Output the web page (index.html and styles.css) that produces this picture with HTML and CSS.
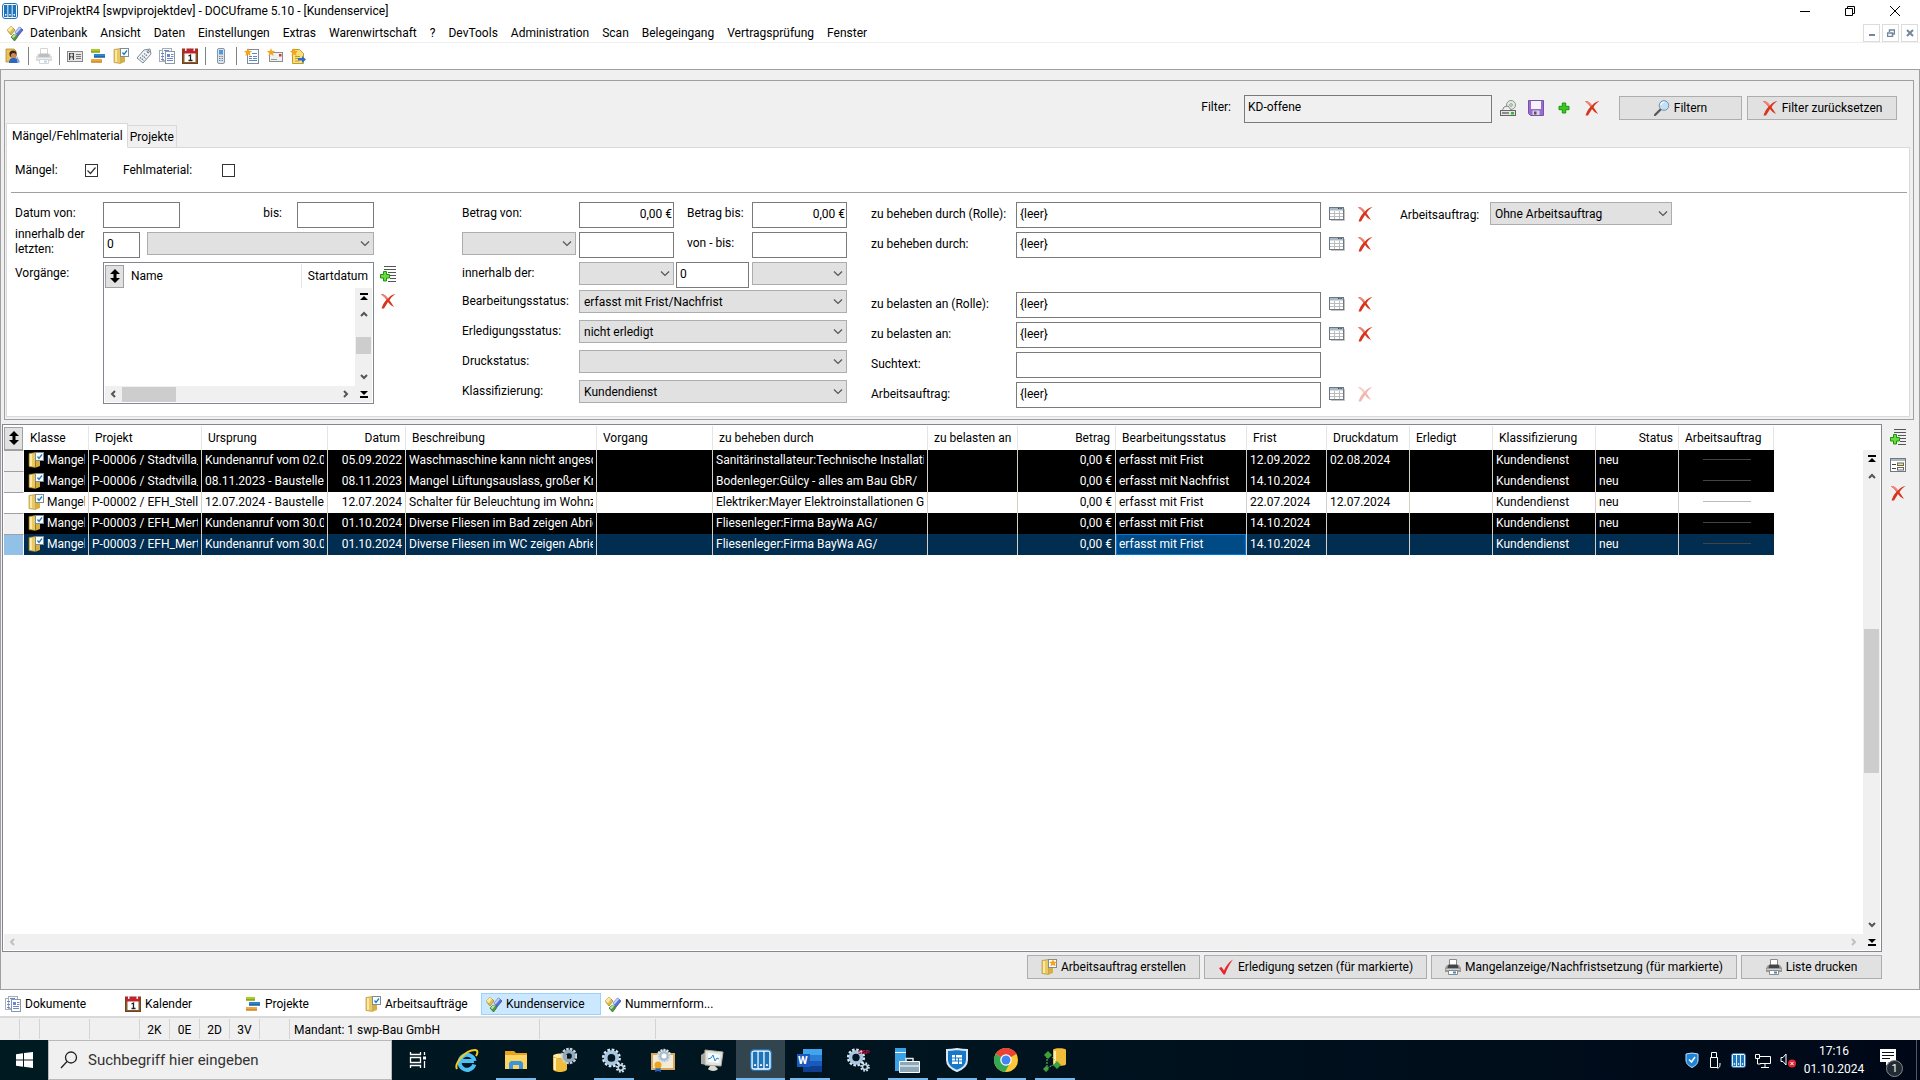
FILE: index.html
```html
<!DOCTYPE html>
<html lang="de">
<head>
    <meta charset="UTF-8">
    <title>DFViProjektR4 [swpviprojektdev] - DOCUframe 5.10 - [Kundenservice]</title>
    <link rel="stylesheet" href="styles.css">
</head>
<body>

<!-- Icon sprite -->
<svg class="sprite" aria-hidden="true">
    <symbol id="docu" viewBox="0 0 16 16">
        <rect x="0.5" y="0.5" width="15" height="15" rx="2.5" fill="#fff" stroke="#1d74b8"/>
        <path d="M2 2h3.4v12H2zM6.3 2h3.4v12H6.3zM10.6 2H14v12h-3.4z" fill="#1d74b8"/>
        <path d="M3 11h1.4v1.4H3zM7.3 11h1.4v1.4H7.3zM11.6 11H13v1.4h-1.4z" fill="#fff"/>
    </symbol>
    <symbol id="diamonds" viewBox="0 0 16 16">
        <path d="M4 1l4 4-4 5-4-5z" fill="#e0be4a" stroke="#9c7a22" stroke-width=".7"/>
        <path d="M4 1l2 2-3 4-3-2z" fill="#f7e9a6"/>
        <path d="M12.500 2L16 5l-5 6-3-4z" fill="#5573d6" stroke="#2c3f9c" stroke-width=".7"/>
        <path d="M12.500 2L14 3.500 9.500 8.500 8 7z" fill="#c3d0fa"/>
        <path d="M7 9l4 2.500L7.500 16 4 12z" fill="#4f9a3c" stroke="#2c6420" stroke-width=".7"/>
        <path d="M7 9l2 1.300-2.500 3L4.500 12z" fill="#b5dfa0"/>
    </symbol>
    <symbol id="user" viewBox="0 0 16 16">
        <path d="M1 1h8l2 2v11H1z" fill="#e8c25c" stroke="#b58a24" stroke-width=".8"/>
        <circle cx="8" cy="6" r="3.600" fill="#3a2416"/>
        <circle cx="8.500" cy="7.500" r="2.600" fill="#c98a5c"/>
        <path d="M4 15c0-4 2-5 4.500-5s5 1 5 5z" fill="#2f65c0"/>
        <path d="M12 8l3 6-3 1z" fill="#7fa7e8"/>
    </symbol>
    <symbol id="printer" viewBox="0 0 16 16">
        <path d="M4.500.5h7v6h-7z" fill="#fff" stroke="#8a8a8a"/>
        <path d="M2 6h12l2 3v4H0V9z" fill="#999"/>
        <path d="M3.500 5.500h9L13.500 9h-11z" fill="#444"/>
        <path d="M1 10h14v1H1z" fill="#d0d0d0"/>
        <path d="M3.500 11.500h9v4h-9z" fill="#fff" stroke="#8a8a8a"/>
        <path d="M8 12.500h3v2H8z" fill="#3a8fc0"/>
    </symbol>
    <symbol id="contact" viewBox="0 0 16 16">
        <rect x=".5" y="3.500" width="15" height="10" fill="#e6e6e6" stroke="#888"/>
        <path d="M2 5h5v7H2z" fill="#444"/>
        <circle cx="4.500" cy="7" r="1.500" fill="#ddd"/>
        <path d="M3 12c0-4 3-4 3 0z" fill="#ddd"/>
        <path d="M9 6.500h5M9 8.500h5M9 10.500h5" stroke="#777"/>
    </symbol>
    <symbol id="bars" viewBox="0 0 16 16">
        <rect x="1" y="1" width="9" height="3.500" fill="#a8cc28"/><path d="M1 3.500h9v1H1z" fill="#6c8c10"/>
        <rect x="4" y="6" width="11" height="3.500" fill="#2a86cc"/><path d="M4 8.500h11v1H4z" fill="#10508c"/>
        <rect x="1" y="11" width="11" height="3.500" fill="#f0a840"/><path d="M1 13.500h11v1H1z" fill="#b87418"/>
    </symbol>
    <symbol id="folder-check" viewBox="0 0 16 16">
        <path d="M8 6l4 1v7l-4 1.500z" fill="#d8ae3c"/>
        <path d="M1 1.500L7.500.5v15L1 14.500z" fill="#eac95e" stroke="#a8842c" stroke-width=".6"/>
        <path d="M2 2h2v12H2z" fill="#f9e9a8"/>
        <rect x="7.500" y=".5" width="8" height="8" fill="#fff" stroke="#7c8c98"/>
        <path d="M9.500 4.500l1.500 2L14 2.500" fill="none" stroke="#1c7cc0" stroke-width="1.300"/>
    </symbol>
    <symbol id="folder-new" viewBox="0 0 16 16">
        <path d="M8 6l4 1v7l-4 1.500z" fill="#d8ae3c"/>
        <path d="M1 1.500L7.500.5v15L1 14.500z" fill="#eac95e" stroke="#a8842c" stroke-width=".6"/>
        <path d="M2 2h2v12H2z" fill="#f9e9a8"/>
        <rect x="7.500" y=".5" width="8" height="8" fill="#fff" stroke="#7c8c98"/>
        <path d="M12 0l1 2.500L16 3l-2 1.500.5 3L12 6 9.500 7.500l.5-3L8 3l3-.5z" fill="#f5a51c"/>
    </symbol>
    <symbol id="tag" viewBox="0 0 16 16">
        <path d="M8 2l6-1 1 5-8 9-6-5z" fill="#f1f5f8" stroke="#7c8a96"/>
        <circle cx="12.200" cy="3.700" r="1.100" fill="#fff" stroke="#667"/>
        <path d="M4 9.500l4 3M6 7.500l4 3M8 5.500l3.500 2.500" stroke="#6c8090" stroke-width="1.200" stroke-dasharray="1.500 .7"/>
    </symbol>
    <symbol id="docs" viewBox="0 0 16 16">
        <rect x=".5" y="2.500" width="9" height="11" fill="#fff" stroke="#a4aeb8"/>
        <rect x="3.500" y=".5" width="9" height="12" fill="#f5f8fc" stroke="#a4aeb8"/>
        <rect x="6.500" y="3.500" width="9" height="12" fill="#fff" stroke="#8c98a4"/>
        <path d="M8 6h3v3H8z" fill="#6a86d0"/>
        <path d="M12 6.500h2.500M12 8.500h2.500M8 10.500h6M8 12.500h6M5 2.500h5M2 5.500h3M2 8.500h3M2 11.500h3" stroke="#6a86d0"/>
    </symbol>
    <symbol id="calendar" viewBox="0 0 16 16">
        <rect x=".5" y="1" width="15" height="14.500" fill="#8a5a2c" stroke="#6c4420"/>
        <path d="M1 1h14v4.500H1z" fill="#c8202c"/>
        <path d="M3 0h1.500v3H3zM11.500 0H13v3h-1.500z" fill="#eee"/>
        <path d="M2.500 5.500h11v8.500h-11z" fill="#fff"/>
        <path d="M6.500 8L8.500 7v5.500M6.500 12.500h4" fill="none" stroke="#222" stroke-width="1.300"/>
    </symbol>
    <symbol id="phone" viewBox="0 0 16 16">
        <rect x="4.500" y=".5" width="7" height="15" rx="1.500" fill="#dfe4ea" stroke="#8894a0"/>
        <path d="M6 2h4v4.500H6z" fill="#4c9ae0"/>
        <path d="M6 8.500h4M6 10.500h4M6 12.500h4" stroke="#78838e" stroke-dasharray="1 .5"/>
    </symbol>
    <symbol id="doc-new" viewBox="0 0 16 16">
        <rect x="3.500" y="1.500" width="11" height="14" fill="#fff" stroke="#7e8a98"/>
        <path d="M8 5.500h5M5 8.500h3M9 8.500h4M5 10.500h3M9 10.500h4M5 12.500h8" stroke="#5b86c4"/>
        <path d="M4 0l1 2.700L8 3 6 5l.5 3L4 6.300 1.500 8 2 5 0 3l3-.3z" fill="#f5a51c"/>
    </symbol>
    <symbol id="mail-new" viewBox="0 0 16 16">
        <rect x="2.500" y="4.500" width="13" height="9" fill="#eef0f2" stroke="#8c8c8c"/>
        <path d="M4 11.500h6" stroke="#999"/><path d="M12 6h2.500v2.500H12z" fill="#d03a30"/>
        <path d="M4 0l1 2.700L8 3 6 5l.5 3L4 6.300 1.500 8 2 5 0 3l3-.3z" fill="#f5a51c"/>
    </symbol>
    <symbol id="note-out" viewBox="0 0 16 16">
        <path d="M2.500 1.500h7l4 4v10h-11z" fill="#f9df7c" stroke="#c09a2c"/>
        <path d="M5 8.500h5M5 10.500h3M5 13h4" stroke="#c09a2c"/>
        <path d="M8 10h4V8l4 3.500-4 3.500v-2.500H8z" fill="#2a6cd0"/>
        <path d="M4 0l1 2.700L8 3 6 5l.5 3L4 6.300 1.500 8 2 5 0 3l3-.3z" fill="#f5a51c"/>
    </symbol>
    <symbol id="load" viewBox="0 0 16 16">
        <circle cx="11" cy="5" r="4.500" fill="#e2e8e2" stroke="#8a9a8a"/>
        <circle cx="11" cy="5" r="1.300" fill="#fff" stroke="#8a9a8a"/>
        <path d="M4 7l4-1 4 5H2z" fill="#eee" stroke="#888"/>
        <rect x=".5" y="10.500" width="15" height="5" fill="#e4e4e4" stroke="#666"/>
        <path d="M2 13h7" stroke="#333"/><path d="M11 12h3v2.500h-3z" fill="#3ab53a"/>
    </symbol>
    <symbol id="save" viewBox="0 0 16 16">
        <path d="M.5.5h15v15h-13l-2-2z" fill="#9a6cd0" stroke="#7a50b0"/>
        <path d="M3 1h10v8H3z" fill="#f4f4fa"/>
        <path d="M4.500 10.500h7V15h-7z" fill="#d8d4e0"/><path d="M6 11.500h2.500v3H6z" fill="#555"/>
    </symbol>
    <symbol id="plus" viewBox="0 0 16 16">
        <path d="M6.300 3h3.400v3.300H13v3.400H9.700V13H6.300V9.700H3V6.300h3.300z" fill="#3cc81c" stroke="#1c9410"/>
    </symbol>
    <symbol id="cross" viewBox="0 0 16 16">
        <path d="M1 1.500c3-.8 5 1.500 7 4C10 3 12.500 1.500 15.500 1c-3 2-4.700 4-6 6.200C11 9.500 12.500 11.500 14 14c-2.500-1-4.500-3-6-5-1.500 2.500-2.500 4-4 6.500H1.500C2.500 12 4.500 9 6.500 6.800 5 4.500 3 2.500 1 1.500z" fill="#d8341c"/>
        <path d="M1 1.500c3-.8 5 1.500 7 4L7 6.500C5 4 3 2.500 1 1.500z" fill="#f08a78"/>
    </symbol>
    <symbol id="lens" viewBox="0 0 16 16">
        <path d="M7 9l-6 6" stroke="#5a5a5a" stroke-width="2.400" stroke-linecap="round"/>
        <circle cx="10" cy="5.500" r="4.800" fill="#bfe2fa" stroke="#7c8ca0"/>
        <path d="M7 5c.3-2 1.700-3 3.500-3" fill="none" stroke="#fff" stroke-width="1.200"/>
    </symbol>
    <symbol id="check" viewBox="0 0 16 16">
        <path d="M1 9l2.500-1L6 11.500C8 7 10.500 3.500 15 .5 11.500 5 9 10 7 15.500H5.500z" fill="#e8242c"/>
    </symbol>
    <symbol id="add-row" viewBox="0 0 16 16">
        <path d="M4 .5h12M4 3.500h12M8 6.500h8M10 9.500h6M10 12.500h6M8 15.500h8" stroke="#555"/>
        <path d="M3.500 5.500h3v3h3v3.500h-3v3h-3v-3h-3V8.500h3z" fill="#6ada3c" stroke="#1c9410"/>
    </symbol>
    <symbol id="grid" viewBox="0 0 16 16">
        <path d="M2 14.500h13.500V3" fill="none" stroke="#c4c4c4"/>
        <rect x=".5" y="1.500" width="14" height="12" fill="#fff" stroke="#6c7884"/>
        <path d="M1 2h13v2.500H1z" fill="#aab8c4"/>
        <path d="M1 7.500h13M1 10.500h13M5.500 5v8M10.500 5v8" stroke="#bbb"/>
        <path d="M9 2.500h4" stroke="#345" stroke-dasharray="1 .6"/>
    </symbol>
    <symbol id="form" viewBox="0 0 16 16">
        <rect x=".5" y="1.500" width="15" height="13" fill="#fff" stroke="#6c7884"/>
        <path d="M1 2h14v2H1z" fill="#aab8c4"/>
        <path d="M2 7.500h4M2 11.500h4" stroke="#444"/>
        <rect x="7.500" y="6" width="6" height="2.500" fill="#f8e060" stroke="#666"/>
        <rect x="7.500" y="10.500" width="6" height="2.500" fill="#fff" stroke="#666"/>
    </symbol>
    <symbol id="sort" viewBox="0 0 10 14"><path d="M5 0l5 5H6.500v4H10l-5 5-5-5h3.500V5H0z"/></symbol>
    <symbol id="first" viewBox="0 0 8 8"><path d="M0 0h8v2H0zM4 3l4 4H0z"/></symbol>
    <symbol id="last" viewBox="0 0 8 8"><path d="M0 6h8v2H0zM4 5L0 1h8z"/></symbol>
    <symbol id="up" viewBox="0 0 8 8"><path d="M1 6l3-3 3 3" fill="none" stroke="currentColor" stroke-width="2"/></symbol>
    <symbol id="down" viewBox="0 0 8 8"><path d="M1 2l3 3 3-3" fill="none" stroke="currentColor" stroke-width="2"/></symbol>
    <symbol id="left" viewBox="0 0 8 8"><path d="M6 1L3 4l3 3" fill="none" stroke="currentColor" stroke-width="2"/></symbol>
    <symbol id="right" viewBox="0 0 8 8"><path d="M2 1l3 3-3 3" fill="none" stroke="currentColor" stroke-width="2"/></symbol>
    <symbol id="gear" viewBox="0 0 24 24">
        <circle cx="10" cy="9.500" r="7.600" fill="none" stroke="#dfe9f2" stroke-width="3" stroke-dasharray="2.400 1.580"/>
        <circle cx="10" cy="9.500" r="5.500" fill="none" stroke="#a9c6e0" stroke-width="3.600"/>
        <circle cx="19" cy="19" r="3.600" fill="none" stroke="#dfe9f2" stroke-width="2.400" stroke-dasharray="1.500 1.330"/>
        <circle cx="19" cy="19" r="2.500" fill="none" stroke="#c2d6e6" stroke-width="1.600"/>
    </symbol>
</svg>

<header class="titlebar">
    <svg class="icon"><use href="#docu"/></svg>
    <span>DFViProjektR4 [swpviprojektdev] - DOCUframe 5.10 - [Kundenservice]</span>
    <div class="caption">
        <button aria-label="Minimieren"><svg width="10" height="10"><path d="M0 5.500h10" stroke="#000"/></svg></button>
        <button aria-label="Wiederherstellen"><svg width="10" height="10"><path d="M.5 2.500h7v7h-7zM2.500 2V.5h7v7H8" fill="none" stroke="#000"/></svg></button>
        <button aria-label="Schließen"><svg width="10" height="10"><path d="M0 0l10 10M10 0L0 10" stroke="#000"/></svg></button>
    </div>
</header>

<nav class="menubar">
    <svg class="icon"><use href="#diamonds"/></svg>
    <a href="#">Datenbank</a>
    <a href="#">Ansicht</a>
    <a href="#">Daten</a>
    <a href="#">Einstellungen</a>
    <a href="#">Extras</a>
    <a href="#">Warenwirtschaft</a>
    <a href="#">?</a>
    <a href="#">DevTools</a>
    <a href="#">Administration</a>
    <a href="#">Scan</a>
    <a href="#">Belegeingang</a>
    <a href="#">Vertragsprüfung</a>
    <a href="#">Fenster</a>
    <div class="child-caption">
        <button aria-label="Fenster minimieren"><svg width="8" height="8"><path d="M1 6h6" stroke="#74869a" stroke-width="2"/></svg></button>
        <button aria-label="Fenster wiederherstellen"><svg width="8" height="8"><path d="M.5 4h5v3.500h-5zM2.500 3V1h5v4H6" fill="none" stroke="#74869a" stroke-width="1.500"/></svg></button>
        <button aria-label="Fenster schließen"><svg width="8" height="8"><path d="M1 1l6 6M7 1L1 7" stroke="#74869a" stroke-width="2"/></svg></button>
    </div>
</nav>

<div class="toolbar">
    <button aria-label="Benutzer"><svg class="icon"><use href="#user"/></svg></button>
    <i></i>
    <button aria-label="Drucken" disabled><svg class="icon"><use href="#printer"/></svg></button>
    <i></i>
    <button aria-label="Adressen"><svg class="icon"><use href="#contact"/></svg></button>
    <button aria-label="Projekte"><svg class="icon"><use href="#bars"/></svg></button>
    <button aria-label="Vorgänge"><svg class="icon"><use href="#folder-check"/></svg></button>
    <button aria-label="Artikel"><svg class="icon"><use href="#tag"/></svg></button>
    <button aria-label="Dokumente"><svg class="icon"><use href="#docs"/></svg></button>
    <button aria-label="Kalender"><svg class="icon"><use href="#calendar"/></svg></button>
    <i></i>
    <button aria-label="Telefon"><svg class="icon"><use href="#phone"/></svg></button>
    <i></i>
    <button aria-label="Neues Dokument"><svg class="icon"><use href="#doc-new"/></svg></button>
    <button aria-label="Neue E-Mail"><svg class="icon"><use href="#mail-new"/></svg></button>
    <button aria-label="Neue Notiz"><svg class="icon"><use href="#note-out"/></svg></button>
</div>

<main class="workspace">
    <section class="filter-panel">
        <div class="filter-head">
            <label for="filter">Filter:</label>
            <input id="filter" class="filter-name" type="text" value="KD-offene" readonly>
            <div class="filter-tools">
                <button class="tool" aria-label="Filter laden"><svg class="icon"><use href="#load"/></svg></button>
                <button class="tool" aria-label="Filter speichern"><svg class="icon"><use href="#save"/></svg></button>
                <button class="tool" aria-label="Filter hinzufügen"><svg class="icon"><use href="#plus"/></svg></button>
                <button class="tool" aria-label="Filter löschen"><svg class="icon"><use href="#cross"/></svg></button>
            </div>
            <button class="btn btn-filter"><svg class="icon"><use href="#lens"/></svg>Filtern</button>
            <button class="btn btn-reset"><svg class="icon"><use href="#cross"/></svg>Filter zurücksetzen</button>
        </div>
        <div class="tabs">
            <button class="tab active">Mängel/Fehlmaterial</button>
            <button class="tab">Projekte</button>
        </div>
        <div class="tab-page">
            <div class="checks">
                <label for="maengel">Mängel:</label><input id="maengel" type="checkbox" checked>
                <label for="fehl">Fehlmaterial:</label><input id="fehl" type="checkbox">
            </div>
            <hr>
            <form class="criteria">
                <div class="group dates">
                    <label for="von">Datum von:</label>
                    <div class="row"><input id="von" class="date" type="text"><label class="push" for="bis">bis:</label><input id="bis" class="date" type="text"></div>
                    <label class="two-line" for="tage">innerhalb der letzten:</label>
                    <div class="row"><input id="tage" class="days" type="text" value="0"><select class="grow" aria-label="Zeiteinheit"><option></option></select></div>
                    <label>Vorgänge:</label>
                    <div class="list-line">
                        <div class="listbox">
                            <table>
                                <tr>
                                    <th class="sorter"><button aria-label="Sortieren"><svg width="10" height="14"><use href="#sort"/></svg></button></th>
                                    <th>Name</th>
                                    <th class="start-date">Startdatum</th>
                                </tr>
                            </table>
                            <div class="vscroll">
                                <svg class="arrow dark"><use href="#first"/></svg>
                                <svg class="arrow"><use href="#up"/></svg>
                                <span class="thumb"></span>
                                <svg class="arrow"><use href="#down"/></svg>
                            </div>
                            <div class="hscroll">
                                <svg class="arrow"><use href="#left"/></svg>
                                <span class="thumb"></span>
                                <svg class="arrow end"><use href="#right"/></svg>
                                <svg class="arrow dark"><use href="#last"/></svg>
                            </div>
                        </div>
                        <div class="list-tools">
                            <button type="button" class="tool" aria-label="Vorgang hinzufügen"><svg class="icon"><use href="#add-row"/></svg></button>
                            <button type="button" class="tool" aria-label="Vorgang entfernen"><svg class="icon"><use href="#cross"/></svg></button>
                        </div>
                    </div>
                </div>

                <div class="group amounts">
                    <label for="bvon">Betrag von:</label>
                    <input id="bvon" class="num" type="text" value="0,00 €">
                    <label class="mid" for="bbis">Betrag bis:</label>
                    <input id="bbis" class="num" type="text" value="0,00 €">

                    <select class="field-pick" aria-label="Feld"><option></option></select>
                    <input type="text" aria-label="von">
                    <label class="mid" for="vb">von - bis:</label>
                    <input id="vb" type="text">

                    <label for="inn">innerhalb der:</label>
                    <select id="inn" class="unit"><option></option></select>
                    <input class="count" type="text" value="0" aria-label="Anzahl">
                    <select class="unit" aria-label="Einheit"><option></option></select>

                    <label for="bs">Bearbeitungsstatus:</label>
                    <select id="bs" class="wide"><option>erfasst mit Frist/Nachfrist</option></select>
                    <label for="es">Erledigungsstatus:</label>
                    <select id="es" class="wide"><option>nicht erledigt</option></select>
                    <label for="ds">Druckstatus:</label>
                    <select id="ds" class="wide"><option></option></select>
                    <label for="kl">Klassifizierung:</label>
                    <select id="kl" class="wide"><option>Kundendienst</option></select>
                </div>

                <div class="group parties">
                    <label for="p1">zu beheben durch (Rolle):</label>
                    <input id="p1" type="text" value="{leer}">
                    <div class="pick"><button type="button" class="tool" aria-label="Auswählen"><svg class="icon"><use href="#grid"/></svg></button><button type="button" class="tool" aria-label="Leeren"><svg class="icon"><use href="#cross"/></svg></button></div>
                    <label for="p2">zu beheben durch:</label>
                    <input id="p2" type="text" value="{leer}">
                    <div class="pick"><button type="button" class="tool" aria-label="Auswählen"><svg class="icon"><use href="#grid"/></svg></button><button type="button" class="tool" aria-label="Leeren"><svg class="icon"><use href="#cross"/></svg></button></div>
                    <span class="blank"></span>
                    <label for="p3">zu belasten an (Rolle):</label>
                    <input id="p3" type="text" value="{leer}">
                    <div class="pick"><button type="button" class="tool" aria-label="Auswählen"><svg class="icon"><use href="#grid"/></svg></button><button type="button" class="tool" aria-label="Leeren"><svg class="icon"><use href="#cross"/></svg></button></div>
                    <label for="p4">zu belasten an:</label>
                    <input id="p4" type="text" value="{leer}">
                    <div class="pick"><button type="button" class="tool" aria-label="Auswählen"><svg class="icon"><use href="#grid"/></svg></button><button type="button" class="tool" aria-label="Leeren"><svg class="icon"><use href="#cross"/></svg></button></div>
                    <label for="p5">Suchtext:</label>
                    <input id="p5" type="text">
                    <span></span>
                    <label for="p6">Arbeitsauftrag:</label>
                    <input id="p6" type="text" value="{leer}">
                    <div class="pick"><button type="button" class="tool" aria-label="Auswählen"><svg class="icon"><use href="#grid"/></svg></button><button type="button" class="tool" aria-label="Leeren" disabled><svg class="icon"><use href="#cross"/></svg></button></div>
                </div>

                <div class="group orders">
                    <label for="aa">Arbeitsauftrag:</label>
                    <select id="aa"><option>Ohne Arbeitsauftrag</option></select>
                </div>
            </form>
        </div>
    </section>

    <section class="results">
        <div class="gridbox">
            <div class="table-area">
                <table class="defects">
                    <colgroup>
                        <col class="w20"><col class="w65"><col class="w113"><col class="w126"><col class="w78"><col class="w191"><col class="w116"><col class="w215"><col class="w90"><col class="w98"><col class="w131"><col class="w80"><col class="w83"><col class="w83"><col class="w103"><col class="w83"><col class="w95">
                    </colgroup>
                    <thead>
                        <tr>
                            <th class="sorter"><button aria-label="Sortieren"><svg width="10" height="14"><use href="#sort"/></svg></button></th>
                            <th>Klasse</th><th>Projekt</th><th>Ursprung</th><th class="r">Datum</th><th>Beschreibung</th><th>Vorgang</th><th>zu beheben durch</th><th>zu belasten an</th><th class="r">Betrag</th><th>Bearbeitungsstatus</th><th>Frist</th><th>Druckdatum</th><th>Erledigt</th><th>Klassifizierung</th><th class="r">Status</th><th>Arbeitsauftrag</th>
                        </tr>
                    </thead>
                    <tbody>
                        <tr>
                            <td></td>
                            <td><div class="klasse"><svg class="icon"><use href="#folder-check"/></svg>Mangel</div></td>
                            <td><div>P-00006 / Stadtvilla_</div></td>
                            <td><div>Kundenanruf vom 02.09</div></td>
                            <td class="r">05.09.2022</td>
                            <td><div>Waschmaschine kann nicht angesc</div></td>
                            <td></td>
                            <td><div>Sanitärinstallateur:Technische Installatio</div></td>
                            <td></td>
                            <td class="r">0,00 €</td>
                            <td>erfasst mit Frist</td><td>12.09.2022</td><td>02.08.2024</td><td></td><td>Kundendienst</td><td>neu</td><td><hr></td>
                        </tr>
                        <tr>
                            <td></td>
                            <td><div class="klasse"><svg class="icon"><use href="#folder-check"/></svg>Mangel</div></td>
                            <td><div>P-00006 / Stadtvilla_</div></td>
                            <td><div>08.11.2023 - Baustellen</div></td>
                            <td class="r">08.11.2023</td>
                            <td><div>Mangel Lüftungsauslass, großer Kra</div></td>
                            <td></td>
                            <td><div>Bodenleger:Gülcy - alles am Bau GbR/</div></td>
                            <td></td>
                            <td class="r">0,00 €</td>
                            <td>erfasst mit Nachfrist</td><td>14.10.2024</td><td></td><td></td><td>Kundendienst</td><td>neu</td><td><hr></td>
                        </tr>
                        <tr class="light">
                            <td></td>
                            <td><div class="klasse"><svg class="icon"><use href="#folder-check"/></svg>Mangel</div></td>
                            <td><div>P-00002 / EFH_Stelle</div></td>
                            <td><div>12.07.2024 - Baustellen</div></td>
                            <td class="r">12.07.2024</td>
                            <td><div>Schalter für Beleuchtung im Wohnz</div></td>
                            <td></td>
                            <td><div>Elektriker:Mayer Elektroinstallationen Gm</div></td>
                            <td></td>
                            <td class="r">0,00 €</td>
                            <td>erfasst mit Frist</td><td>22.07.2024</td><td>12.07.2024</td><td></td><td>Kundendienst</td><td>neu</td><td><hr></td>
                        </tr>
                        <tr>
                            <td></td>
                            <td><div class="klasse"><svg class="icon"><use href="#folder-check"/></svg>Mangel</div></td>
                            <td><div>P-00003 / EFH_Merte</div></td>
                            <td><div>Kundenanruf vom 30.09</div></td>
                            <td class="r">01.10.2024</td>
                            <td><div>Diverse Fliesen im Bad zeigen Abrie</div></td>
                            <td></td>
                            <td><div>Fliesenleger:Firma BayWa AG/</div></td>
                            <td></td>
                            <td class="r">0,00 €</td>
                            <td>erfasst mit Frist</td><td>14.10.2024</td><td></td><td></td><td>Kundendienst</td><td>neu</td><td><hr></td>
                        </tr>
                        <tr class="selected">
                            <td></td>
                            <td><div class="klasse"><svg class="icon"><use href="#folder-check"/></svg>Mangel</div></td>
                            <td><div>P-00003 / EFH_Merte</div></td>
                            <td><div>Kundenanruf vom 30.09</div></td>
                            <td class="r">01.10.2024</td>
                            <td><div>Diverse Fliesen im WC zeigen Abrie</div></td>
                            <td></td>
                            <td><div>Fliesenleger:Firma BayWa AG/</div></td>
                            <td></td>
                            <td class="r">0,00 €</td>
                            <td class="current">erfasst mit Frist</td><td>14.10.2024</td><td></td><td></td><td>Kundendienst</td><td>neu</td><td><hr></td>
                        </tr>
                    </tbody>
                </table>
            </div>
            <div class="vscroll">
                <svg class="arrow dark"><use href="#first"/></svg>
                <svg class="arrow"><use href="#up"/></svg>
                <span class="thumb"></span>
                <svg class="arrow"><use href="#down"/></svg>
            </div>
            <div class="hscroll off">
                <svg class="arrow"><use href="#left"/></svg>
                <svg class="arrow end"><use href="#right"/></svg>
                <svg class="arrow dark"><use href="#last"/></svg>
            </div>
        </div>
        <div class="side-tools">
            <button class="tool" aria-label="Zeile hinzufügen"><svg class="icon"><use href="#add-row"/></svg></button>
            <button class="tool" aria-label="Bearbeiten"><svg class="icon"><use href="#form"/></svg></button>
            <button class="tool" aria-label="Löschen"><svg class="icon"><use href="#cross"/></svg></button>
        </div>
    </section>

    <div class="actions">
        <button class="btn"><svg class="icon"><use href="#folder-new"/></svg>Arbeitsauftrag erstellen</button>
        <button class="btn"><svg class="icon"><use href="#check"/></svg>Erledigung setzen (für markierte)</button>
        <button class="btn"><svg class="icon"><use href="#printer"/></svg>Mangelanzeige/Nachfristsetzung (für markierte)</button>
        <button class="btn btn-print"><svg class="icon"><use href="#printer"/></svg>Liste drucken</button>
    </div>
</main>

<nav class="window-tabs">
    <a href="#"><svg class="icon"><use href="#docs"/></svg>Dokumente</a>
    <a href="#"><svg class="icon"><use href="#calendar"/></svg>Kalender</a>
    <a href="#"><svg class="icon"><use href="#bars"/></svg>Projekte</a>
    <a href="#"><svg class="icon"><use href="#folder-check"/></svg>Arbeitsaufträge</a>
    <a href="#" class="active"><svg class="icon"><use href="#diamonds"/></svg>Kundenservice</a>
    <a href="#"><svg class="icon"><use href="#diamonds"/></svg>Nummernform...</a>
</nav>

<div class="statusbar">
    <span class="s20"></span><span class="s20"></span><span class="s50"></span><span class="s50"></span>
    <span class="s30">2K</span><span class="s30">0E</span><span class="s30">2D</span><span class="s30">3V</span><span class="s30"></span>
    <span class="client">Mandant: 1 swp-Bau GmbH</span><span class="s115"></span>
</div>

<footer class="taskbar">
    <button class="start" aria-label="Start"><svg width="17" height="16" viewBox="0 0 17 16"><path d="M0 2.300l7-1v6.300H0zM8 1.100L17 0v7.600H8zM0 8.500h7v6.300l-7-1zM8 8.500h9V16l-9-1.200z" fill="#fff"/></svg></button>
    <div class="search">
        <svg width="18" height="18" viewBox="0 0 18 18"><circle cx="11" cy="6.500" r="5.500" fill="none" stroke="#222" stroke-width="1.300"/><path d="M7 10.500L1 17" stroke="#222" stroke-width="1.300"/></svg>
        <input type="text" placeholder="Suchbegriff hier eingeben" aria-label="Suche">
    </div>
    <div class="apps">
        <button aria-label="Taskansicht"><svg width="18" height="18" viewBox="0 0 18 18"><path d="M1.500 1v2.500h10V1M1.500 6.500h10v5h-10zM1.500 17v-2.500h10V17M15.500 1v3M15.500 10v7" fill="none" stroke="#fff" stroke-width="1.300"/><path d="M14 5.500h3v3h-3z" fill="#fff"/></svg></button>
        <button aria-label="Internet Explorer"><svg width="24" height="24" viewBox="0 0 24 24"><path d="M5 13h14M19.300 16.500A7.500 7.500 0 1 1 19.500 13" fill="none" stroke="#4cc0f4" stroke-width="4"/><path d="M2 21C-1 16 10 2 20 2c3 0 3 3 1 6" fill="none" stroke="#f8ca20" stroke-width="2"/></svg></button>
        <button class="open" aria-label="Explorer"><svg width="22" height="20" viewBox="0 0 22 20"><path d="M0 1h9l2 2h11v5H0z" fill="#e8a21c"/><path d="M0 5h22v14H0z" fill="#fcd462"/><path d="M4 19v-6l2-2h10l2 2v6h-4v-4H8v4z" fill="#3c94dc"/></svg></button>
        <button aria-label="Datenbankdienst"><svg width="24" height="26" viewBox="0 0 24 26"><ellipse cx="7" cy="9" rx="7" ry="2.500" fill="#ffe9a0"/><path d="M0 9c0 3 14 3 14 0v13c0 4-14 4-14 0z" fill="#f0bc3c"/><path d="M2 11v12" stroke="#fff0b8" stroke-width="2"/><circle cx="16" cy="9" r="6.500" fill="none" stroke="#c8d4de" stroke-width="3.500" stroke-dasharray="2.400 1"/><circle cx="16" cy="9" r="4.600" fill="none" stroke="#93a8ba" stroke-width="3.500"/></svg></button>
        <button class="open" aria-label="Dienste"><svg width="25" height="25"><use href="#gear"/></svg></button>
        <button aria-label="Lizenzverwaltung"><svg width="24" height="26" viewBox="0 0 24 26"><rect x="1" y="7" width="22" height="15" fill="#f5ead4" stroke="#d9a860" stroke-width="2"/><circle cx="13" cy="9" r="6" fill="#a8bccc" stroke="#dce4ea" stroke-width="2.500" stroke-dasharray="2 1"/><circle cx="13" cy="9" r="2.500" fill="#fff"/><path d="M5 19l-1 6 3-1 3 1-1-6z" fill="#2464c4"/><circle cx="7" cy="18" r="3.500" fill="#eba41c"/></svg></button>
        <button aria-label="Systemmonitor"><svg width="24" height="24" viewBox="0 0 24 24"><path d="M1 7l6-4v14l-6-1z" fill="#a8a8a0"/><path d="M5 2l18 2-2 14-16-1z" fill="#e4e4dc" stroke="#b0b0a8"/><path d="M8 5l12 1.500-1 8.500-11-1z" fill="#f4faff"/><path d="M8 11l3-1 2-3 2 6 2-3 2 1" fill="none" stroke="#2a84c8"/><path d="M10 18h5l3 3c-2 3-9 2-10 0z" fill="#dadad2"/></svg></button>
        <button class="open active" aria-label="DOCUframe"><svg width="22" height="22"><use href="#docu"/></svg></button>
        <button class="open" aria-label="Word"><svg width="25" height="23" viewBox="0 0 25 23"><path d="M6 0h19v6H6z" fill="#41a5ee"/><path d="M6 6h19v6H6z" fill="#2b7cd3"/><path d="M6 12h19v5H6z" fill="#185abd"/><path d="M6 17h19v6H6z" fill="#103f91"/><path d="M0 5h13v13H0z" fill="#185abd"/><text x="1" y="15" class="word">W</text></svg></button>
        <button aria-label="SSP-Dienst"><svg width="25" height="25" viewBox="0 0 25 25"><use href="#gear" width="24" height="24"/><text x="12" y="6" class="ssp">SSP</text></svg></button>
        <button class="open" aria-label="Server-Manager"><svg width="25" height="26" viewBox="0 0 25 26"><path d="M0 1h11v23H0z" fill="#3ca0e4"/><path d="M0 5.500h11" stroke="#fff"/><path d="M4.500 14.500h20v11h-20z" fill="#8fa8b8" stroke="#fff"/><path d="M11 14v-2.500h7V14M4 19h21" fill="none" stroke="#dde8ee" stroke-width="1.500"/></svg></button>
        <button class="open" aria-label="FortiClient"><svg width="22" height="24" viewBox="0 0 22 24"><path d="M1 2c4 0 7-.5 10-1 3 .5 6 1 10 1v10c0 6-5 9-10 11C6 21 1 18 1 12z" fill="#1878c8" stroke="#d8e8f6" stroke-width="2"/><path d="M6 7h10v9H6z" fill="#fff"/><path d="M6 10h10M6 13h10M9.500 7v3M12.500 13v3M9.500 10v3M12.500 10v3" stroke="#1878c8"/></svg></button>
        <button class="open" aria-label="Chrome"><svg width="24" height="24" viewBox="0 0 24 24"><circle cx="12" cy="12" r="12" fill="#fcc934"/><path d="M12 12L1.600 6a12 12 0 0 1 20.800 0z" fill="#ea4335"/><path d="M12 12L1.600 6A12 12 0 0 0 11 24l5-9z" fill="#34a853"/><circle cx="12" cy="12" r="5.800" fill="#fff"/><circle cx="12" cy="12" r="4.500" fill="#4285f4"/></svg></button>
        <button class="open" aria-label="Datenbank-Abgleich"><svg width="24" height="24" viewBox="0 0 24 24"><path d="M10 2c0-2.500 13-2.500 13 0v14c0 2.500-13 2.500-13 0z" fill="#f0bc3c"/><path d="M12 3v13" stroke="#fff0b8" stroke-width="2"/><path d="M4 8v12l10-5L9 9" fill="none" stroke="#6cc860" stroke-dasharray="2 1"/><path d="M5 3l4 4-4 4-4-4zM14 13l4 4-4 4-4-4zM3 18l3 3-3 3-3-3z" fill="#3fa03c"/></svg></button>
    </div>
    <div class="tray">
        <svg width="14" height="16" viewBox="0 0 14 16"><path d="M1 2l6-1 6 1v6c0 4-3 6-6 7.500C4 14 1 12 1 8z" fill="#1c84d8" stroke="#c8e0f4"/><path d="M4 7.500L6.500 10 10 5" fill="none" stroke="#fff" stroke-width="1.500"/></svg>
        <svg width="14" height="17" viewBox="0 0 14 17"><path d="M3.500 5V.5h5V5M2.500 5.500h7v10h-7zM9 16c3 0 3-2 3-5" fill="none" stroke="#fff"/></svg>
        <svg width="15" height="15"><use href="#docu"/></svg>
        <svg width="16" height="15" viewBox="0 0 16 15"><path d="M5 3.500h10.500v7H5M10 11v3M6 14.500h8M.5 1.500h4v4h-4zM2.500 6v5h3" fill="none" stroke="#fff"/></svg>
        <svg width="16" height="16" viewBox="0 0 16 16"><path d="M1 5.500h2L6 2v11L3 9.500H1z" fill="none" stroke="#fff"/><circle cx="12" cy="11.500" r="4" fill="#e02834"/><path d="M10.500 10l3 3M13.500 10l-3 3" stroke="#fff"/></svg>
    </div>
    <div class="clock"><span>17:16</span><span>01.10.2024</span></div>
    <button class="notify" aria-label="Benachrichtigungen"><svg width="26" height="24" viewBox="0 0 26 24"><path d="M1 1h16v13H10l-3 4v-4H1z" fill="#fff"/><path d="M3 4.500h12M3 7.500h12M3 10.500h8" stroke="#08101c"/></svg><b>1</b></button>
</footer>

</body>
</html>
```
FILE: styles.css
```css
* {
    box-sizing: border-box;
}
body {
    margin: 0;
    height: 100vh;
    display: flex;
    flex-direction: column;
    background: #fff;
    color: #000;
    font-family: Roboto, "Open Sans", sans-serif;
    font-size: 12px;
    line-height: 16px;
    overflow: hidden;
}
a {
    color: inherit;
    text-decoration: none;
}
button, input, select {
    font: inherit;
    color: inherit;
    margin: 0;
    padding: 0;
    border: none;
    border-radius: 0;
    background: none;
}
svg {
    flex: none;
    display: block;
}
.sprite {
    display: none;
}
.icon {
    width: 16px;
    height: 16px;
}
.tool {
    width: 16px;
    height: 16px;
}
button:disabled svg {
    opacity: 0.35;
}

/* Title, menu, toolbar */
.titlebar {
    height: 22px;
    display: flex;
    align-items: center;
    gap: 5px;
    padding-left: 2px;
}
.caption {
    margin-left: auto;
    margin-right: 3px;
    display: flex;
}
.caption button {
    width: 45px;
    height: 22px;
    display: flex;
    align-items: center;
    justify-content: center;
}
.menubar {
    height: 21px;
    display: flex;
    align-items: center;
    gap: 13px;
    padding: 1px 2px 0 7px;
    border-bottom: 1px solid #f0f0f0;
}
.menubar .icon {
    margin-right: -6px;
}
.child-caption {
    margin-left: auto;
    display: flex;
    gap: 2px;
}
.child-caption button {
    width: 17px;
    height: 18px;
    border: 1px solid #dcdcdc;
    display: flex;
    align-items: center;
    justify-content: center;
}
.toolbar {
    height: 26px;
    display: flex;
    align-items: center;
    gap: 7px;
    padding-left: 5px;
}
.toolbar i {
    width: 1px;
    height: 18px;
    background: #808080;
}

/* Work area */
.workspace {
    flex: 1;
    min-height: 0;
    display: flex;
    flex-direction: column;
    border: 1px solid #a0a0a0;
    background: #f0f0f0;
    padding: 10px 0 10px;
}
.filter-panel {
    margin: 0 5px 0 3px;
    padding: 14px 3px 2px 1px;
    border: 1px solid #a0a0a0;
}
.filter-head {
    display: flex;
    align-items: flex-start;
    justify-content: flex-end;
    padding-right: 13px;
    height: 28px;
}
.filter-head label {
    margin: 4px 13px 0 0;
}
.filter-name {
    width: 248px;
    height: 28px;
    padding: 0 3px 4px;
    border: 1px solid #7a7a7a;
}
.filter-tools {
    display: flex;
    gap: 12px;
    padding: 5px 19px 0 8px;
}
.btn {
    height: 24px;
    display: flex;
    align-items: center;
    justify-content: center;
    gap: 4px;
    padding: 0 13px;
    border: 1px solid #adadad;
    background: #e1e1e1;
    white-space: nowrap;
}
.filter-head .btn {
    margin-top: 1px;
}
.btn-filter {
    width: 123px;
    margin-right: 5px;
}
.btn-reset {
    width: 150px;
}
.tabs {
    display: flex;
    align-items: flex-end;
    height: 25px;
    margin-bottom: -1px;
}
.tab {
    height: 23px;
    padding: 0 2px;
    border: 1px solid #d9d9d9;
    border-left: none;
}
.tab.active {
    height: 25px;
    padding: 0 4px 0 5px;
    background: #fff;
    border-left: 1px solid #d9d9d9;
    border-bottom-color: #fff;
}
.tab-page {
    background: #fff;
    border: 1px solid #d9d9d9;
    height: 270px;
}
.tab.active, .tab-page {
    position: relative;
}
.tab.active {
    z-index: 1;
}
.checks {
    display: flex;
    align-items: center;
    height: 44px;
    padding-left: 8px;
}
.checks label {
    width: 99px;
}
.checks label:first-child {
    width: 70px;
}
.checks input {
    appearance: none;
    width: 13px;
    height: 13px;
    margin-right: 25px;
    border: 1px solid #333;
    background: #fff;
}
.checks input:checked {
    background: url("data:image/svg+xml,%3Csvg xmlns='http://www.w3.org/2000/svg' width='11' height='11'%3E%3Cpath d='M1.500 5.500l3 3 5-6' fill='none' stroke='%23333' stroke-width='1.200'/%3E%3C/svg%3E") no-repeat;
}
.tab-page > hr {
    margin: 0 2px 0 4px;
    border: none;
    border-top: 1px solid #a0a0a0;
}

/* Filter criteria */
.criteria {
    display: flex;
    align-items: flex-start;
    padding: 9px 8px 0;
}
.criteria input {
    width: 100%;
    height: 26px;
    padding: 0 3px 2px;
    border: 1px solid #7a7a7a;
    background: #fff;
}
.criteria select {
    appearance: none;
    width: 100%;
    height: 23px;
    padding: 0 20px 0 4px;
    border: 1px solid #adadad;
    background: #e1e1e1 url("data:image/svg+xml,%3Csvg xmlns='http://www.w3.org/2000/svg' width='10' height='6'%3E%3Cpath d='M1 .5l4 4 4-4' fill='none' stroke='%23555' stroke-width='1.200'/%3E%3C/svg%3E") no-repeat right 3px center;
}
.criteria label {
    padding-top: 3px;
    white-space: nowrap;
}
.group {
    display: grid;
    align-items: start;
}
.dates {
    grid-template-columns: 88px 294px;
    grid-template-rows: 30px 30px 142px;
    margin-right: 65px;
}
.dates .row {
    display: flex;
    width: 271px;
}
.dates .date {
    width: 77px;
}
.dates .push {
    margin-left: auto;
    margin-right: 15px;
}
.dates .days {
    width: 37px;
    margin-right: 7px;
}
.dates .grow {
    flex: 1;
}
.criteria .two-line {
    white-space: normal;
    line-height: 15px;
    padding: 0;
    margin-top: -5px;
}
.list-line {
    display: flex;
    gap: 6px;
}
.list-tools {
    display: flex;
    flex-direction: column;
    gap: 11px;
    padding-top: 4px;
}
.listbox {
    width: 271px;
    height: 142px;
    border: 1px solid #828790;
    padding: 1px;
    display: grid;
    grid-template-columns: 1fr 17px;
    grid-template-rows: 24px 1fr 16px;
}
.listbox table {
    grid-column: 1 / 3;
    border-collapse: collapse;
    width: 100%;
    height: 24px;
}
.listbox .vscroll {
    grid-column: 2;
}
.listbox .start-date {
    width: 70px;
    padding: 0 4px 0 6px;
    border-left: 1px solid #e5e5e5;
}
th {
    padding: 0 6px;
    font-weight: normal;
    text-align: left;
    white-space: nowrap;
}
.sorter {
    width: 20px;
    padding: 0;
}
.sorter button {
    display: flex;
    align-items: center;
    justify-content: center;
    width: 19px;
    height: 23px;
    border: 1px solid #a0a0a0;
    background: #e1e1e1;
}

/* Scrollbars */
.vscroll, .hscroll {
    display: flex;
    align-items: center;
    justify-content: space-between;
    background: #f0f0f0;
    color: #555;
}
.vscroll {
    flex-direction: column;
    padding: 5px 0;
}
.vscroll .dark {
    margin-bottom: 9px;
}
.hscroll {
    grid-column: 1 / 3;
    height: 16px;
    padding: 0 4px;
}
.arrow {
    width: 8px;
    height: 8px;
}
.dark {
    color: #000;
}
.thumb {
    background: #cdcdcd;
}
.listbox .vscroll .thumb {
    width: 15px;
    height: 17px;
    margin: auto;
}
.listbox .hscroll .thumb {
    width: 54px;
    height: 15px;
    margin-left: 5px;
}
.hscroll .end {
    margin-left: auto;
    margin-right: 10px;
}
.off .arrow:not(.dark) {
    color: #bfbfbf;
}

.amounts {
    grid-template-columns: 117px 97px 76px 95px;
    grid-template-rows: 30px 30px 28px 30px 30px 30px 24px;
    margin-right: 24px;
}
.amounts input, .amounts .unit {
    width: 95px;
}
.amounts .num {
    text-align: right;
    padding-right: 1px;
}
.amounts .mid {
    padding-left: 11px;
}
.amounts .field-pick {
    width: 114px;
}
.amounts .count {
    width: 73px;
}
.amounts .wide {
    grid-column: 2 / 5;
}
.parties {
    grid-template-columns: 145px 305px 79px;
    grid-template-rows: 30px 30px 30px 30px 30px 30px 26px;
}
.parties label {
    padding-top: 4px;
}
.parties .blank {
    grid-column: 1 / 4;
}
.pick {
    display: flex;
    gap: 12px;
    padding: 4px 0 0 8px;
}
.orders {
    grid-template-columns: 90px 182px;
}
.orders label {
    padding-top: 5px;
}

/* Results */
.results {
    flex: 1;
    min-height: 0;
    display: flex;
    margin-top: 4px;
    padding-left: 1px;
}
.gridbox {
    flex: 1;
    min-width: 0;
    display: grid;
    grid-template-columns: 1fr 17px;
    grid-template-rows: 1fr 16px;
    border: 1px solid #828790;
    padding: 1px;
    background: #fff;
}
.gridbox .vscroll {
    margin-top: 24px;
}
.gridbox .vscroll .thumb {
    width: 15px;
    height: 144px;
    margin: auto;
}
.table-area {
    overflow: hidden;
}
.defects {
    table-layout: fixed;
    width: 1770px;
    border-collapse: separate;
    border-spacing: 0;
}
.w20 { width: 20px; }
.w65 { width: 65px; }
.w78 { width: 78px; }
.w80 { width: 80px; }
.w83 { width: 83px; }
.w90 { width: 90px; }
.w95 { width: 95px; }
.w98 { width: 98px; }
.w103 { width: 103px; }
.w113 { width: 113px; }
.w116 { width: 116px; }
.w126 { width: 126px; }
.w131 { width: 131px; }
.w191 { width: 191px; }
.w215 { width: 215px; }
.defects th {
    height: 24px;
    border-right: 1px solid #e5e5e5;
}
.defects th.sorter {
    padding: 0;
    border: none;
}
.defects th.r {
    padding-right: 5px;
}
.r {
    text-align: right;
}
.defects td {
    height: 21px;
    padding: 0 3px 2px;
    background: #000;
    color: #fff;
    border-right: 1px solid #d4d0c8;
    white-space: nowrap;
}
.defects td:last-child {
    border-right: none;
}
.defects td > div {
    overflow: hidden;
}
.defects td:first-child {
    background: #f0f0f0;
    border: none;
    border-top: 1px solid #a0a0a0;
    border-right: 1px solid #fff;
}
.defects .klasse {
    display: flex;
    align-items: center;
    gap: 3px;
    padding-left: 1px;
}
.defects .light td {
    background: #fff;
    color: #000;
}
.defects .selected td {
    background: #002d50;
}
.defects .selected td:first-child {
    background: #91c1e7;
}
.defects .selected .current {
    background: #004a85;
    box-shadow: inset 0 0 0 1px #0078d7;
}
.defects hr {
    width: 48px;
    margin: 0 auto;
    border: none;
    border-top: 1px solid #444;
}
.defects .light hr {
    border-color: #bbb;
}
.side-tools {
    width: 37px;
    display: flex;
    flex-direction: column;
    gap: 12px;
    padding: 5px 0 0 8px;
}
.actions {
    display: flex;
    justify-content: flex-end;
    gap: 4px;
    padding: 3px 37px 0 0;
}
.btn-print {
    width: 141px;
}

/* Window tabs and status bar */
.window-tabs {
    height: 26px;
    display: flex;
    align-items: center;
    padding: 1px 0 0 1px;
}
.window-tabs a {
    width: 120px;
    height: 22px;
    display: flex;
    align-items: center;
    gap: 4px;
    padding-left: 4px;
}
.window-tabs .active {
    background: #cce8ff;
    border: 1px solid #99d1ff;
}
.statusbar {
    height: 24px;
    display: flex;
    background: #f0f0f0;
    border-top: 2px solid #d9d9d9;
}
.statusbar span {
    margin: 1px 0;
    padding-top: 3px;
    border-right: 1px solid #d4d4d4;
    text-align: center;
}
.s20 { width: 20px; }
.s30 { width: 30px; }
.s50 { width: 50px; }
.s115 { width: 116px; }
.statusbar .client {
    width: 250px;
    padding-left: 4px;
    text-align: left;
}

/* Taskbar */
.taskbar {
    height: 40px;
    display: flex;
    background: linear-gradient(90deg, #001a22, #001420 50%, #000818);
    color: #fff;
}
.start {
    width: 48px;
    display: flex;
    align-items: center;
    justify-content: center;
}
.search {
    width: 344px;
    display: flex;
    align-items: center;
    gap: 10px;
    padding-left: 11px;
    background: #f0f0f0;
    border: 1px solid #b8b8b8;
}
.search input {
    flex: 1;
    font-size: 15px;
    line-height: 20px;
}
.search input::placeholder {
    color: #333;
    opacity: 1;
}
.apps {
    display: flex;
    padding-left: 1px;
}
.apps button {
    width: 49px;
    display: flex;
    align-items: center;
    justify-content: center;
    background: linear-gradient(#76b9ed, #76b9ed) no-repeat center bottom / 0 2px;
}
.apps .open {
    background-size: 40px 2px;
}
.apps .active {
    background-color: #32454e;
    background-size: 100% 2px;
}
.word {
    font-size: 11px;
    font-weight: bold;
    fill: #fff;
}
.ssp {
    font-size: 6px;
    font-weight: bold;
    fill: #c8143c;
}
.tray {
    margin-left: auto;
    display: flex;
    align-items: center;
    gap: 9px;
    padding-right: 2px;
}
.clock {
    width: 72px;
    display: flex;
    flex-direction: column;
    align-items: center;
    justify-content: center;
    line-height: 18px;
}
.notify {
    position: relative;
    width: 47px;
    padding-left: 9px;
    border-right: 1px solid #556;
    margin-right: 3px;
}
.notify b {
    position: absolute;
    right: 13px;
    bottom: 3px;
    width: 17px;
    height: 17px;
    border: 1px solid #888;
    border-radius: 50%;
    background: #222a33;
    font-size: 11px;
    font-weight: normal;
    line-height: 15px;
}
```
